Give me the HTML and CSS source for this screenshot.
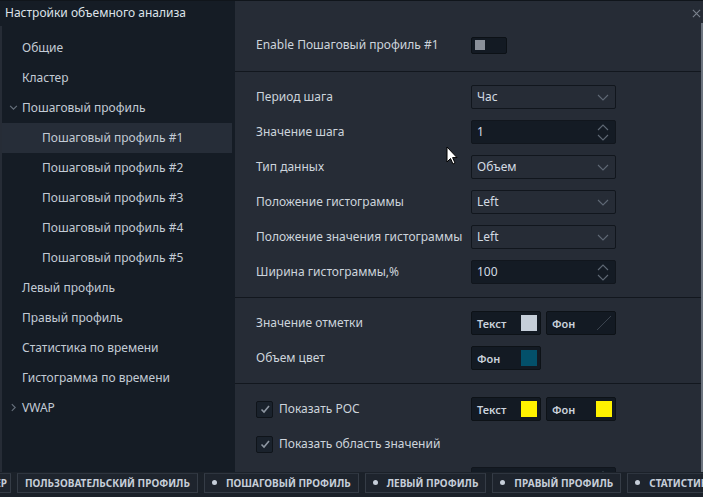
FILE: index.html
```html
<!DOCTYPE html>
<html lang="ru">
<head>
<meta charset="utf-8">
<title>Настройки объемного анализа</title>
<link rel="stylesheet" href="styles.css">
</head>
<body>
<div class="window">
  <div class="body">
    <aside class="sidebar">
      <div class="title">Настройки объемного анализа</div>
      <ul class="nav">
        <li class="item">Общие</li>
        <li class="item">Кластер</li>
        <li class="item"><svg class="chev" viewBox="0 0 8 8"><path d="M1 2.5 L4 5.5 L7 2.5"/></svg>Пошаговый профиль</li>
        <li class="item sub selected">Пошаговый профиль #1</li>
        <li class="item sub">Пошаговый профиль #2</li>
        <li class="item sub">Пошаговый профиль #3</li>
        <li class="item sub">Пошаговый профиль #4</li>
        <li class="item sub">Пошаговый профиль #5</li>
        <li class="item">Левый профиль</li>
        <li class="item">Правый профиль</li>
        <li class="item">Статистика по времени</li>
        <li class="item">Гистограмма по времени</li>
        <li class="item"><svg class="chev" viewBox="0 0 8 8"><path d="M2.5 1 L5.5 4 L2.5 7"/></svg>VWAP</li>
      </ul>
    </aside>
    <main class="panel">
      <div class="content">
        <section class="sec first">
          <div class="row">
            <span class="label">Enable Пошаговый профиль #1</span>
            <span class="toggle"><i></i></span>
          </div>
        </section>
        <section class="sec">
          <div class="row">
            <span class="label">Период шага</span>
            <span class="select">Час<svg class="arr" viewBox="0 0 12 7"><path d="M1 1 L6 6 L11 1"/></svg></span>
          </div>
          <div class="row">
            <span class="label">Значение шага</span>
            <span class="select input">1<span class="spin"><svg viewBox="0 0 12 7"><path d="M1 6 L6 1 L11 6"/></svg><svg viewBox="0 0 12 7"><path d="M1 1 L6 6 L11 1"/></svg></span></span>
          </div>
          <div class="row">
            <span class="label">Тип данных</span>
            <span class="select">Объем<svg class="arr" viewBox="0 0 12 7"><path d="M1 1 L6 6 L11 1"/></svg></span>
          </div>
          <div class="row">
            <span class="label">Положение гистограммы</span>
            <span class="select">Left<svg class="arr" viewBox="0 0 12 7"><path d="M1 1 L6 6 L11 1"/></svg></span>
          </div>
          <div class="row">
            <span class="label">Положение значения гистограммы</span>
            <span class="select">Left<svg class="arr" viewBox="0 0 12 7"><path d="M1 1 L6 6 L11 1"/></svg></span>
          </div>
          <div class="row">
            <span class="label">Ширина гистограммы,%</span>
            <span class="select input">100<span class="spin"><svg viewBox="0 0 12 7"><path d="M1 6 L6 1 L11 6"/></svg><svg viewBox="0 0 12 7"><path d="M1 1 L6 6 L11 1"/></svg></span></span>
          </div>
        </section>
        <section class="sec">
          <div class="row">
            <span class="label">Значение отметки</span>
            <span class="colors">
              <span class="color">Текст<i class="sw light"></i></span>
              <span class="color">Фон<svg class="sw none" viewBox="0 0 16 16"><path d="M15 1 L1 15"/></svg></span>
            </span>
          </div>
          <div class="row">
            <span class="label">Объем цвет</span>
            <span class="colors">
              <span class="color">Фон<i class="sw teal"></i></span>
            </span>
          </div>
        </section>
        <section class="sec">
          <div class="row">
            <span class="label check"><span class="box"><svg viewBox="0 0 12 12"><path d="M2.5 6.5 L5 9 L10 3"/></svg></span>Показать POC</span>
            <span class="colors">
              <span class="color">Текст<i class="sw yellow"></i></span>
              <span class="color">Фон<i class="sw yellow"></i></span>
            </span>
          </div>
          <div class="row">
            <span class="label check"><span class="box"><svg viewBox="0 0 12 12"><path d="M2.5 6.5 L5 9 L10 3"/></svg></span>Показать область значений</span>
          </div>
          <div class="row">
            <span class="label"></span>
            <span class="select input">&nbsp;<span class="spin"><svg viewBox="0 0 12 7"><path d="M1 6 L6 1 L11 6"/></svg><svg viewBox="0 0 12 7"><path d="M1 1 L6 6 L11 1"/></svg></span></span>
          </div>
        </section>
      </div>
      <svg class="close" viewBox="0 0 10 10"><path d="M1 1 L9 9 M9 1 L1 9"/></svg>
      <div class="scrollbar"></div>
    </main>
  </div>
  <footer class="tabs">
    <span class="tab partial">КЛАСТЕР</span>
    <span class="tab">ПОЛЬЗОВАТЕЛЬСКИЙ ПРОФИЛЬ</span>
    <span class="tab"><i class="dot"></i>ПОШАГОВЫЙ ПРОФИЛЬ</span>
    <span class="tab"><i class="dot"></i>ЛЕВЫЙ ПРОФИЛЬ</span>
    <span class="tab"><i class="dot"></i>ПРАВЫЙ ПРОФИЛЬ</span>
    <span class="tab"><i class="dot"></i>СТАТИСТИКА ПО ВРЕМЕНИ</span>
  </footer>
  <svg class="cursor" viewBox="0 0 12 19"><path d="M1 1 L1 16 L4.5 12.5 L7 18 L9 17 L6.6 11.6 L11 11.6 Z"/></svg>
</div>
</body>
</html>
```

FILE: styles.css
```css
* { box-sizing: border-box; }
html, body { margin: 0; padding: 0; }
body {
  width: 703px;
  height: 497px;
  overflow: hidden;
  background: #1b2129;
  font-family: "Noto Sans", "Open Sans", sans-serif;
  font-size: 12px;
  color: #cdd4dc;
}
.window {
  position: relative;
  width: 703px;
  height: 497px;
  display: flex;
  flex-direction: column;
  border-top: 1px solid #10151b;
}
.body {
  display: flex;
  height: 471px;
  background: #262c36;
}
.sidebar {
  width: 233px;
  margin-left: 2px;
  background: #151c25;
  flex: none;
}
.title {
  height: 25px;
  line-height: 24px;
  padding-left: 5px;
  margin-left: -2px;
  color: #dde2e9;
  margin-bottom: 7px;
  background: #151c25;
}
.nav { list-style: none; margin: 0; padding: 0; }
.item {
  height: 30px;
  display: flex;
  align-items: center;
  padding-left: 20px;
  padding-bottom: 2px;
  color: #c3cbd5;
  position: relative;
}
.item.sub { padding-left: 40px; }
.item.selected { background: #262d38; margin-right: 3px; }
.chev {
  position: absolute;
  left: 7px;
  top: 10px;
  width: 9px;
  height: 9px;
  fill: none;
  stroke: #66707c;
  stroke-width: 1;
}
.panel {
  flex: 1;
  position: relative;
  overflow: hidden;
}
.sec {
  padding: 13px 0 13px 21px;
  border-bottom: 1px solid #12171e;
  display: flex;
  flex-direction: column;
  gap: 11px;
}
.sec.first { padding-top: 32px; padding-bottom: 14px; }
.row {
  height: 24px;
  display: flex;
  align-items: center;
}
.label {
  width: 215px;
  height: 24px;
  flex: none;
  display: flex;
  align-items: center;
  padding-bottom: 2px;
  color: #cdd4dc;
}
.toggle {
  width: 36px;
  height: 17px;
  background: #131a23;
  border: 1px solid #0c1116;
  border-radius: 2px;
  display: flex;
  align-items: center;
  padding-left: 3px;
}
.toggle i {
  display: block;
  width: 10px;
  height: 10px;
  background: #8a9099;
}
.select {
  width: 145px;
  height: 24px;
  border: 1px solid #11161d;
  border-radius: 2px;
  background: #262c36;
  display: flex;
  align-items: center;
  padding: 0 5px 2px;
  color: #d3dae2;
  position: relative;
}
.select.input { background: #141b24; }
.arr {
  position: absolute;
  right: 6px;
  top: 8px;
  width: 12px;
  height: 7px;
  fill: none;
  stroke: #5f6975;
  stroke-width: 1.1;
}
.spin {
  position: absolute;
  right: 6px;
  top: 3px;
  display: flex;
  flex-direction: column;
  gap: 3px;
}
.spin svg {
  width: 12px;
  height: 7px;
  fill: none;
  stroke: #5f6975;
  stroke-width: 1.1;
  display: block;
}
.colors { display: flex; gap: 5px; }
.color {
  width: 70px;
  height: 24px;
  background: #131a23;
  border: 1px solid #0d1217;
  border-radius: 2px;
  display: flex;
  align-items: center;
  justify-content: space-between;
  padding: 0 3px 0 5px;
  font-size: 11px;
  font-weight: 600;
  color: #cad2dc;
}
.sw {
  display: block;
  width: 16px;
  height: 16px;
}
.sw.light { background: #c5ced9; }
.sw.teal { background: #03506a; }
.sw.yellow { background: #fff200; }
.sw.none { fill: none; stroke: #3a434e; stroke-width: 1; }
.check { gap: 6px; padding-left: 0; }
.box {
  width: 17px;
  height: 17px;
  margin-top: 2px;
  background: #1a222c;
  border: 1px solid #0f141a;
  border-radius: 2px;
  display: flex;
  align-items: center;
  justify-content: center;
}
.box svg {
  width: 12px;
  height: 12px;
  fill: none;
  stroke: #8d96a1;
  stroke-width: 1.6;
}
.close {
  position: absolute;
  right: 2px;
  top: 8px;
  width: 9px;
  height: 9px;
  fill: none;
  stroke: #7b838e;
  stroke-width: 1.2;
}
.scrollbar {
  position: absolute;
  right: 0;
  top: 22px;
  bottom: 0;
  width: 2px;
  background: #6b737e;
}
.tabs {
  height: 25px;
  display: flex;
  gap: 6px;
  padding-top: 1px;
  overflow: hidden;
  background: #1b2129;
}
.tab {
  flex: none;
  height: 20px;
  display: flex;
  align-items: center;
  padding: 0 7px 1px;
  border: 1px solid #353c46;
  border-top-color: #2e353f;
  background: #1e242d;
  font-size: 10px;
  font-weight: 700;
  color: #c6ced9;
  white-space: nowrap;
}
.tab.partial {
  width: 11px;
  border-left: none;
  justify-content: flex-end;
  overflow: hidden;
  padding: 0 3px 1px 0;
}
.dot {
  display: block;
  width: 5px;
  height: 5px;
  border-radius: 50%;
  background: #c6ced9;
  margin-right: 9px;
}
.cursor {
  position: absolute;
  left: 446px;
  top: 145px;
  width: 12px;
  height: 19px;
  fill: #ffffff;
  stroke: #000000;
  stroke-width: 1;
}
```
